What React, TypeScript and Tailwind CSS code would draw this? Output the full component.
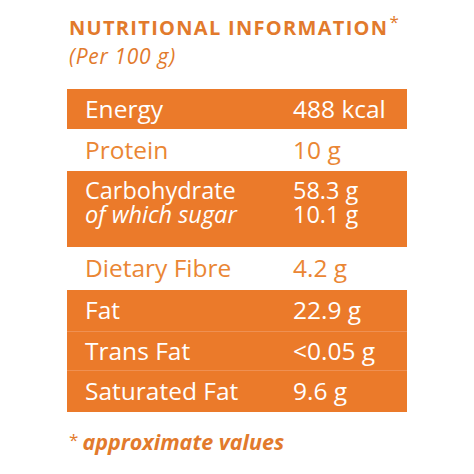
import React from "react";

const F = { fontFamily: '"Open Sans", "Liberation Sans", sans-serif' };

function Row({ label, value, filled, h }: { label: React.ReactNode; value: React.ReactNode; filled?: boolean; h: string }) {
  return (
    <div className={`flex items-center ${h} ${filled ? "text-white" : "text-[#ea8634]"}`}>
      <div className="w-[226px] pl-[18px]">{label}</div>
      <div>{value}</div>
    </div>
  );
}

export default function App() {
  return (
    <div className="w-[474px] h-[474px] bg-white" style={F}>
      <div className="pl-[69px] pt-[14px] w-[474px]">
        <div className="flex items-start text-[#e27a2c]">
          <span className="text-[20px] font-bold leading-[28px] tracking-[1.3px]">NUTRITIONAL INFORMATION</span>
          <span className="text-[17px] leading-[17px] ml-[1px] mt-[-1px] font-normal">*</span>
        </div>
        <div className="text-[21px] italic font-medium text-[#e27a2c] leading-[26px] mt-[1px] tracking-[0.7px]">(Per 100 g)</div>
      </div>
      <div className="ml-[67px] w-[340px] mt-[20px] text-[24.5px] font-normal">
        <div className="bg-[#eb7a2a]">
          <Row label="Energy" value="488 kcal" filled h="h-[40px]" />
        </div>
        <Row label="Protein" value="10 g" h="h-[42px]" />
        <div className="bg-[#eb7a2a] h-[76px] pt-[6.5px]">
          <div className="flex text-white text-[23.5px] leading-[24px]">
            <div className="w-[226px] pl-[18px]">
              Carbohydrate
              <br />
              <span className="italic">of which sugar</span>
            </div>
            <div>
              58.3 g
              <br />
              10.1 g
            </div>
          </div>
        </div>
        <Row label="Dietary Fibre" value="4.2 g" h="h-[43px]" />
        <div className="bg-[#eb7a2a]">
          <Row label="Fat" value="22.9 g" filled h="h-[41px]" />
          <div className="h-px bg-[#ef9052]" />
          <Row label="Trans Fat" value="<0.05 g" filled h="h-[38px]" />
          <div className="h-px bg-[#ef9052]" />
          <Row label="Saturated Fat" value="9.6 g" filled h="h-[41px]" />
        </div>
        <div className="mt-[16px] ml-[2px] text-[#e27a2c] text-[21.5px] font-bold italic leading-[28px] flex items-start">
          <span className="text-[17px] font-normal not-italic mr-[4px] leading-[17px] mt-[3px]">*</span>
          <span>approximate values</span>
        </div>
      </div>
    </div>
  );
}
